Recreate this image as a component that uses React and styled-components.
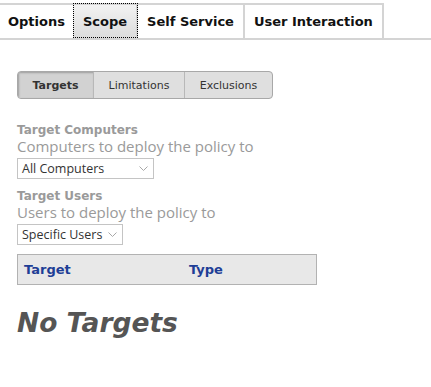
import React from "react";
import styled, { createGlobalStyle } from "styled-components";

const Global = createGlobalStyle`
  html, body { margin: 0; padding: 0; background: #fff; }
  body { font-family: "DejaVu Sans", Verdana, sans-serif; }
  * { box-sizing: border-box; }
`;

const Page = styled.div`
  width: 431px;
  height: 387px;
  background: #fff;
  padding-top: 3px;
`;

const TabBar = styled.div`
  display: flex;
  border-bottom: 2px solid #d4d4d4;
  height: 37px;
`;

const Tab = styled.div`
  display: flex;
  align-items: center;
  height: 35px;
  padding: 0 9px;
  border-top: 2px solid #d4d4d4;
  border-right: 2px solid #d4d4d4;
  font: bold 13px "DejaVu Sans", Verdana, sans-serif;
  color: #111;
  ${(p) =>
    p.$active &&
    `
    background: linear-gradient(#f2f2f2, #dcdcdc);
    outline: 1px dotted #000;
    outline-offset: -1px;
    padding: 0 9px 0 10px;
  `}
  ${(p) => p.$first && `padding: 0 8px; border-right: none;`}
`;

const Content = styled.div`
  padding: 31px 17px 0;
`;

const Segmented = styled.div`
  display: inline-flex;
  height: 28px;
  border: 1px solid #a8a8a8;
  border-radius: 4px;
  overflow: hidden;
  background: #dfdfdf;
`;

const Segment = styled.div`
  width: ${(p) => p.$w}px;
  display: flex;
  align-items: center;
  justify-content: center;
  font-size: 11px;
  color: #333;
  font-family: "DejaVu Sans", Verdana, sans-serif;
  border-left: ${(p) => (p.$first ? "none" : "1px solid #b8b8b8")};
  ${(p) =>
    p.$active &&
    `
    background: #d2d2d2;
    font-weight: bold;
    box-shadow: inset 1px 1px 2px rgba(0,0,0,0.25);
  `}
`;

const Label = styled.div`
  margin-top: ${(p) => p.$mt}px;
  font: bold 12px/16px "DejaVu Sans", Verdana, sans-serif;
  color: #9a9a9a;
`;

const Desc = styled.div`
  font: 15px/17px "Open Sans", "Noto Sans", sans-serif;
  color: #9a9a9a;
`;

const Select = styled.div`
  margin-top: 3px;
  width: ${(p) => p.$w}px;
  height: 21px;
  border: 1px solid #c4c4c4;
  display: flex;
  align-items: center;
  justify-content: space-between;
  padding: 0 5px 0 4px;
  font: 12.5px "Open Sans", "Noto Sans", sans-serif;
  color: #333;
  background: #fff;
`;

const Chevron = () => (
  <svg width="9" height="6" viewBox="0 0 9 6">
    <path d="M0.5 0.5 L4.5 4.5 L8.5 0.5" fill="none" stroke="#a8a8a8" strokeWidth="1" />
  </svg>
);

const TableHead = styled.div`
  margin-top: 9px;
  width: 300px;
  height: 31px;
  display: grid;
  grid-template-columns: 165px 1fr;
  align-items: center;
  background: #e8e8e8;
  border: 1px solid #b2b2b2;
`;

const HeadCell = styled.div`
  padding-left: 6px;
  font: bold 13px "DejaVu Sans", Verdana, sans-serif;
  color: #1e3e96;
`;

const Empty = styled.div`
  margin-top: 23px;
  font: italic bold 26.5px/30px "DejaVu Sans", Verdana, sans-serif;
  color: #555;
`;

export default function App() {
  return (
    <Page>
      <Global />
      <TabBar>
        <Tab $first>Options</Tab>
        <Tab $active>Scope</Tab>
        <Tab>Self Service</Tab>
        <Tab>User Interaction</Tab>
      </TabBar>
      <Content>
        <Segmented>
          <Segment $w={75} $first $active>Targets</Segment>
          <Segment $w={91}>Limitations</Segment>
          <Segment $w={88}>Exclusions</Segment>
        </Segmented>
        <Label $mt={23}>Target Computers</Label>
        <Desc>Computers to deploy the policy to</Desc>
        <Select $w={137}>
          <span>All Computers</span>
          <Chevron />
        </Select>
        <Label $mt={9}>Target Users</Label>
        <Desc>Users to deploy the policy to</Desc>
        <Select $w={106}>
          <span>Specific Users</span>
          <Chevron />
        </Select>
        <TableHead>
          <HeadCell>Target</HeadCell>
          <HeadCell>Type</HeadCell>
        </TableHead>
        <Empty>No Targets</Empty>
      </Content>
    </Page>
  );
}
